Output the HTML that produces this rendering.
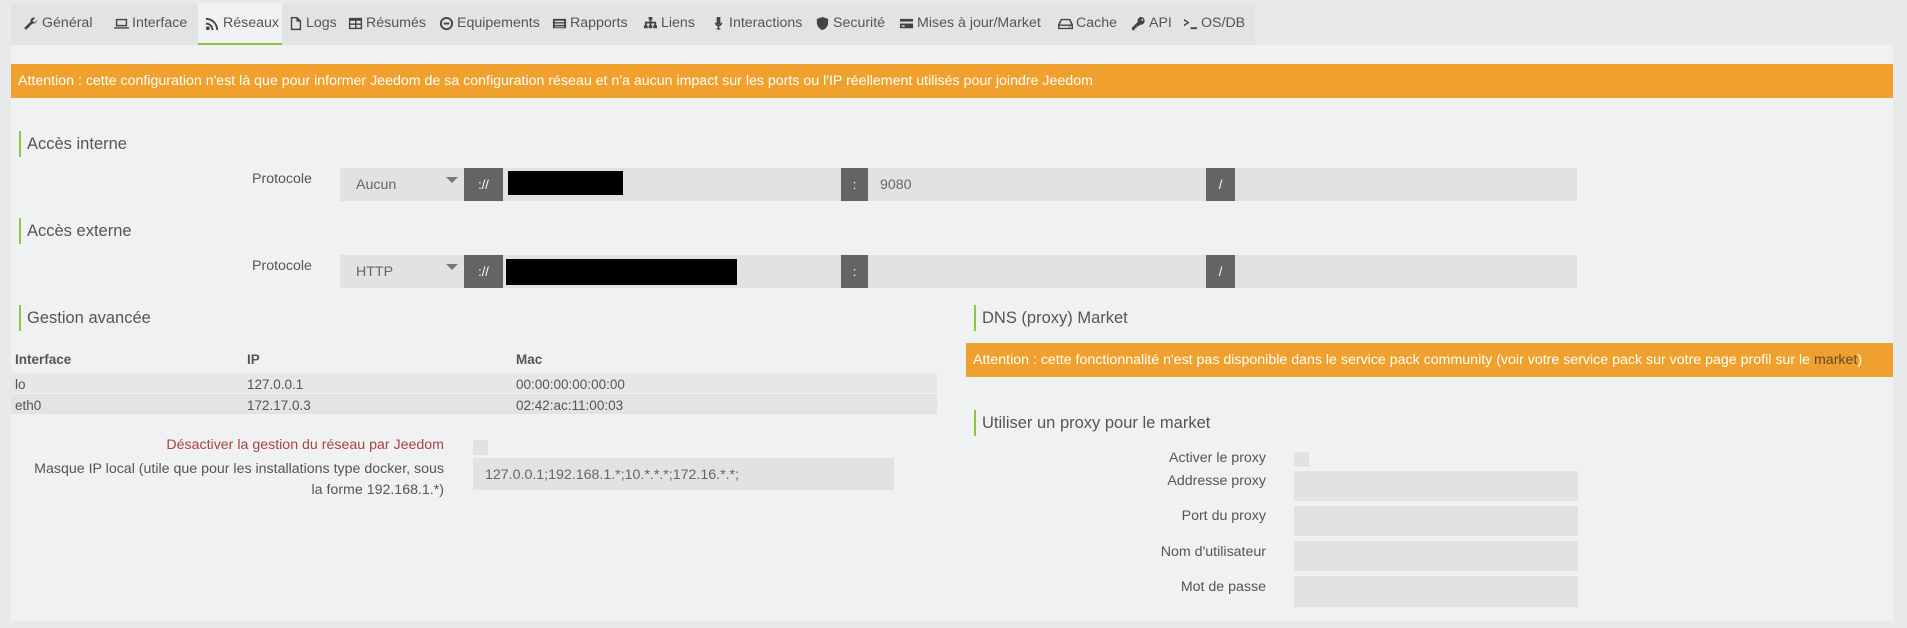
<!DOCTYPE html>
<html><head><meta charset="utf-8"><style>
*{margin:0;padding:0;box-sizing:border-box}
body{width:1907px;height:628px;background:#e8e9ea;font-family:"Liberation Sans",sans-serif;color:#555;position:relative;overflow:hidden;font-size:14.2px}
.a{position:absolute;white-space:nowrap}
.tabbar{position:absolute;left:11px;top:3px;width:1244px;height:42px;background:#e2e3e4}
.tab{position:absolute;top:15px;font-size:14.2px;color:#555;display:flex;align-items:center;gap:3px}
.tab svg{width:15px;height:15px;fill:#444}
.panel{position:absolute;left:11px;top:45px;width:1882px;height:576px;background:#f0f1f2}
.warn{position:absolute;background:#f0a02c;color:#fff;font-size:14.2px;padding-left:7px;display:flex;align-items:center}
.h{position:absolute;border-left:2px solid #8dc63f;padding-left:6px;font-size:16.5px;color:#555;height:26px;line-height:26px}
.inp{position:absolute;background:#e1e2e3}
.dk{position:absolute;background:#646464;color:#fff;font-size:13px;text-align:center}
.lbl{position:absolute;font-size:14.2px;color:#555;text-align:right;white-space:nowrap}
.blk{position:absolute;background:#000}
.t{font-size:13.5px}
</style></head><body>
<div class="tabbar"></div>
<div class="a" style="left:198px;top:3px;width:84px;height:42px;background:#f0f1f2;border-bottom:2px solid #8dc63f"></div>
<div class="tab" style="left:24px"><svg viewBox="0 0 16 16"><path d="M14 4l-3 3-2-2 3-3C10 1 8 2 7 4c-.4 1 0 2 0 2L1 12c-.6.6-.6 1.5 0 2s1.4.6 2 0l6-6s1 .4 2 0c2-1 3-3 3-4z"/></svg>Général</div>
<div class="tab" style="left:114px"><svg viewBox="0 0 16 16"><path d="M2 3h12v8H2zM3.5 4.5v5h9v-5zM0 12h16v1.5H0z"/></svg>Interface</div>
<div class="tab" style="left:205px"><svg viewBox="0 0 16 16"><circle cx="3" cy="13" r="2"/><path d="M1 7a8 8 0 018 8H7a6 6 0 00-6-6zM1 2a13 13 0 0113 13h-2A11 11 0 001 4z"/></svg>Réseaux</div>
<div class="tab" style="left:288px"><svg viewBox="0 0 16 16"><path d="M3 1h7l4 4v10H3zM4.5 2.5v11h8V6H9V2.5z"/></svg>Logs</div>
<div class="tab" style="left:348px"><svg viewBox="0 0 16 16"><path d="M1 2h14v12H1zM2.5 5v3h5V5zm6.5 0v3h4.5V5zM2.5 9.5v3h5v-3zm6.5 0v3h4.5v-3z"/></svg>Résumés</div>
<div class="tab" style="left:439px"><svg viewBox="0 0 16 16"><path d="M8 1a7 7 0 100 14A7 7 0 008 1zm0 2a5 5 0 110 10A5 5 0 018 3zm-3 4h6v2H5z"/></svg>Equipements</div>
<div class="tab" style="left:552px"><svg viewBox="0 0 16 16"><path d="M1 3h14v10H1zm2 2v1.5h10V5zm0 3v1.5h10V8zm0 3v1h10v-1z"/></svg>Rapports</div>
<div class="tab" style="left:643px"><svg viewBox="0 0 16 16"><path d="M6 1h4v3H9v2h5v4h1v3h-4v-3h1V8H9v2h1v3H6v-3h1V8H4v2h1v3H1v-3h1V6h5V4H6z"/></svg>Liens</div>
<div class="tab" style="left:711px"><svg viewBox="0 0 16 16"><path d="M6 1h4v8H6zM4 7h1.5a2.5 2.5 0 005 0H12a4 4 0 01-3.3 4v2H10v1.5H6V13h1.3v-2A4 4 0 014 7z"/></svg>Interactions</div>
<div class="tab" style="left:815px"><svg viewBox="0 0 16 16"><path d="M8 1l6 2v4c0 4-3 7-6 8-3-1-6-4-6-8V3z"/></svg>Securité</div>
<div class="tab" style="left:899px"><svg viewBox="0 0 16 16"><path d="M1 3h14v10H1zm0 3v2h14V6zm2 4v1.5h3V10z"/></svg>Mises à jour/Market</div>
<div class="tab" style="left:1058px"><svg viewBox="0 0 16 16"><path d="M3 3h10l3 6v5H0V9zm1 1.5L2 9h12l-2-4.5zM1.5 10.5v2h13v-2zm10 .5h1.5v1h-1.5z"/></svg>Cache</div>
<div class="tab" style="left:1131px"><svg viewBox="0 0 16 16"><path d="M11 1a4 4 0 00-3.8 5.3L1 12.5V15h3v-2h2v-2h2l1.7-1.7A4 4 0 1011 1zm1 2a1 1 0 110 2 1 1 0 010-2z"/></svg>API</div>
<div class="tab" style="left:1183px"><svg viewBox="0 0 16 16"><path d="M1 3l6 4-6 4V9l3.5-2L1 5zm7 9h7v2H8z"/></svg>OS/DB</div>

<div class="panel"></div>
<div class="warn" style="left:11px;top:64px;width:1882px;height:34px">Attention : cette configuration n'est là que pour informer Jeedom de sa configuration réseau et n'a aucun impact sur les ports ou l'IP réellement utilisés pour joindre Jeedom</div>

<div class="h" style="left:19px;top:131px">Accès interne</div>
<div class="lbl" style="left:252px;top:171px">Protocole</div>
<div class="inp" style="left:340px;top:168px;width:1237px;height:33px"></div>
<div class="a" style="left:356px;top:177px;color:#666">Aucun</div>
<div class="a" style="left:446px;top:177px;width:0;height:0;border-left:6px solid transparent;border-right:6px solid transparent;border-top:6px solid #777"></div>
<div class="dk" style="left:464px;top:168px;width:39px;height:33px;line-height:33px">://</div>
<div class="blk" style="left:508px;top:171px;width:115px;height:24px"></div>
<div class="dk" style="left:841px;top:168px;width:27px;height:33px;line-height:33px">:</div>
<div class="a" style="left:880px;top:177px;color:#666">9080</div>
<div class="dk" style="left:1206px;top:168px;width:29px;height:33px;line-height:33px">/</div>

<div class="h" style="left:19px;top:218px">Accès externe</div>
<div class="lbl" style="left:252px;top:258px">Protocole</div>
<div class="inp" style="left:340px;top:255px;width:1237px;height:33px"></div>
<div class="a" style="left:356px;top:264px;color:#666">HTTP</div>
<div class="a" style="left:446px;top:264px;width:0;height:0;border-left:6px solid transparent;border-right:6px solid transparent;border-top:6px solid #777"></div>
<div class="dk" style="left:464px;top:255px;width:39px;height:33px;line-height:33px">://</div>
<div class="blk" style="left:506px;top:259px;width:231px;height:26px"></div>
<div class="dk" style="left:841px;top:255px;width:27px;height:33px;line-height:33px">:</div>
<div class="dk" style="left:1206px;top:255px;width:29px;height:33px;line-height:33px">/</div>

<div class="h" style="left:19px;top:305px">Gestion avancée</div>
<div class="a t" style="left:15px;top:352px;font-weight:bold">Interface</div>
<div class="a t" style="left:247px;top:352px;font-weight:bold">IP</div>
<div class="a t" style="left:516px;top:352px;font-weight:bold">Mac</div>
<div class="a" style="left:11px;top:373px;width:926px;height:20px;background:#e6e7e8"></div>
<div class="a" style="left:11px;top:394px;width:926px;height:20px;background:#e2e3e4"></div>
<div class="a t" style="left:15px;top:377px">lo</div>
<div class="a t" style="left:247px;top:377px">127.0.0.1</div>
<div class="a t" style="left:516px;top:377px">00:00:00:00:00:00</div>
<div class="a t" style="left:15px;top:398px">eth0</div>
<div class="a t" style="left:247px;top:398px">172.17.0.3</div>
<div class="a t" style="left:516px;top:398px">02:42:ac:11:00:03</div>

<div class="lbl" style="right:1463px;top:437px;color:#a94442">Désactiver la gestion du réseau par Jeedom</div>
<div class="inp" style="left:473px;top:440px;width:15px;height:15px"></div>
<div class="lbl" style="right:1463px;top:459px;line-height:21px">Masque IP local (utile que pour les installations type docker, sous<br>la forme 192.168.1.*)</div>
<div class="inp" style="left:473px;top:458px;width:421px;height:32px"></div>
<div class="a" style="left:485px;top:467px;color:#666">127.0.0.1;192.168.1.*;10.*.*.*;172.16.*.*;</div>

<div class="h" style="left:974px;top:305px">DNS (proxy) Market</div>
<div class="warn" style="left:966px;top:343px;width:927px;height:34px">Attention : cette fonctionnalité n'est pas disponible dans le service pack community (voir votre service pack sur votre page profil sur le&nbsp;<span style="color:#5a4a2a">market</span>)</div>
<div class="h" style="left:974px;top:410px">Utiliser un proxy pour le market</div>
<div class="lbl" style="right:641px;top:450px">Activer le proxy</div>
<div class="inp" style="left:1294px;top:452px;width:15px;height:15px"></div>
<div class="lbl" style="right:641px;top:473px">Addresse proxy</div>
<div class="inp" style="left:1294px;top:471px;width:284px;height:30px"></div>
<div class="lbl" style="right:641px;top:508px">Port du proxy</div>
<div class="inp" style="left:1294px;top:506px;width:284px;height:30px"></div>
<div class="lbl" style="right:641px;top:544px">Nom d'utilisateur</div>
<div class="inp" style="left:1294px;top:541px;width:284px;height:30px"></div>
<div class="lbl" style="right:641px;top:579px">Mot de passe</div>
<div class="inp" style="left:1294px;top:576px;width:284px;height:31px"></div>
</body></html>
